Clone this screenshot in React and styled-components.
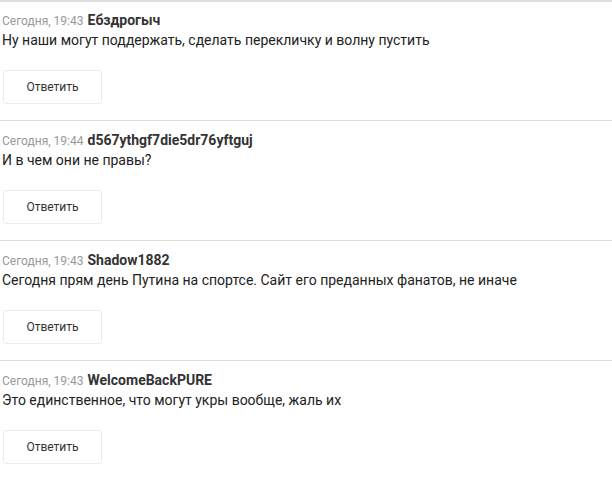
import styled, { createGlobalStyle } from "styled-components";

const GlobalStyle = createGlobalStyle`
    body {
        margin: 0;
        background: #fff;
        font-family: Roboto, "Liberation Sans", sans-serif;
    }
`;

const Lista = styled.div`
    width: 612px;
    border-top: 2px solid #dcdcdc;
`;

const Comentario = styled.div`
    padding: ${(p) => (p.primeiro ? "8px" : "9px")} 0 16px 2px;
    border-top: ${(p) => (p.primeiro ? "none" : "1px solid #e3e0d2")};
`;

const Cabecalho = styled.div`
    height: 20px;
    line-height: 20px;
    white-space: nowrap;
`;

const Data = styled.span`
    font-size: 12px;
    color: #999;
    margin-right: 4px;
`;

const Autor = styled.span`
    font-size: 14px;
    font-weight: 700;
    color: #333;
`;

const Texto = styled.div`
    font-size: 14px;
    line-height: 20px;
    color: #222;
`;

const Botao = styled.button`
    margin: 20px 0 0 1px;
    width: 99px;
    height: 34px;
    padding: 0;
    background: #fff;
    border: 1px solid #ececec;
    border-radius: 3px;
    font-family: Roboto, "Liberation Sans", sans-serif;
    font-size: 12px;
    color: #333;
    cursor: pointer;
    display: block;
`;

const comentarios = [
    { id: 1, data: "Сегодня, 19:43", autor: "Ебздрогыч", texto: "Ну наши могут поддержать, сделать перекличку и волну пустить" },
    { id: 2, data: "Сегодня, 19:44", autor: "d567ythgf7die5dr76yftguj", texto: "И в чем они не правы?" },
    { id: 3, data: "Сегодня, 19:43", autor: "Shadow1882", texto: "Сегодня прям день Путина на спортсе. Сайт его преданных фанатов, не иначе" },
    { id: 4, data: "Сегодня, 19:43", autor: "WelcomeBackPURE", texto: "Это единственное, что могут укры вообще, жаль их" },
];

export default function App() {
    return (
        <>
            <GlobalStyle />
            <Lista>
                {comentarios.map((c, i) => (
                    <Comentario key={c.id} primeiro={i === 0}>
                        <Cabecalho>
                            <Data>{c.data}</Data>
                            <Autor>{c.autor}</Autor>
                        </Cabecalho>
                        <Texto>{c.texto}</Texto>
                        <Botao>Ответить</Botao>
                    </Comentario>
                ))}
            </Lista>
        </>
    );
}
